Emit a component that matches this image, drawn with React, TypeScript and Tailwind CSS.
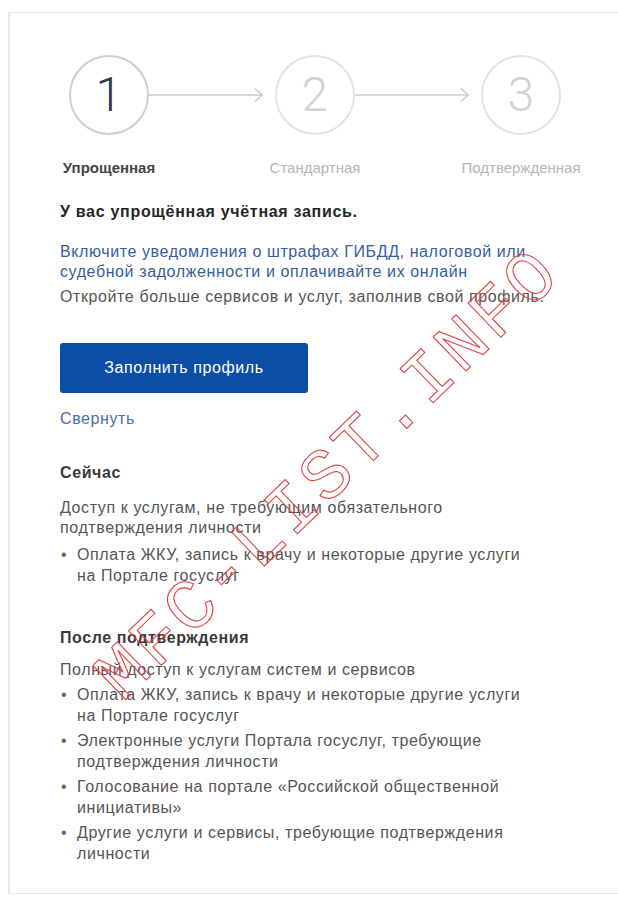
import React from "react";

const steps = [
  { n: "1", label: "Упрощенная", active: true },
  { n: "2", label: "Стандартная", active: false },
  { n: "3", label: "Подтвержденная", active: false },
];

const nowList = ["Оплата ЖКУ, запись к врачу и некоторые другие услуги на Портале госуслуг"];

const afterList = [
  "Оплата ЖКУ, запись к врачу и некоторые другие услуги на Портале госуслуг",
  "Электронные услуги Портала госуслуг, требующие подтверждения личности",
  "Голосование на портале «Российской общественной инициативы»",
  "Другие услуги и сервисы, требующие подтверждения личности",
];

function Arrow() {
  return (
    <div className="flex h-[80px] w-[126px] items-center">
      <svg width="126" height="16" viewBox="0 0 126 16" fill="none">
        <path d="M0 8H113" stroke="#cccccc" strokeWidth="1.6" />
        <path d="M106 1.5L113 8L106 14.5" stroke="#cccccc" strokeWidth="1.6" />
      </svg>
    </div>
  );
}

function Step({ n, label, active }: { n: string; label: string; active: boolean }) {
  return (
    <div className="flex w-[80px] flex-col items-center">
      <div
        className={
          active
            ? "flex h-[80px] w-[80px] items-center justify-center rounded-full border-2 border-[#c6d1dc] text-[48px] font-light text-[#2c3845]"
            : "flex h-[80px] w-[80px] items-center justify-center rounded-full border-2 border-[#e3e3e3] text-[48px] font-light text-[#d2d2d2]"
        }
        style={{ fontFamily: "Roboto, 'Liberation Sans', sans-serif" }}
      >
        {n}
      </div>
      <div
        className={
          active
            ? "mt-[23px] whitespace-nowrap text-[15px] leading-[20px] font-semibold tracking-normal text-[#444]"
            : "mt-[23px] whitespace-nowrap text-[15px] leading-[20px] tracking-normal text-[#b6b6b6]"
        }
      >
        {label}
      </div>
    </div>
  );
}

function Bullets({ items }: { items: string[] }) {
  return (
    <ul className="flex w-[475px] flex-col gap-[4px] leading-[21px]">
      {items.map((t) => (
        <li key={t} className="flex">
          <span className="w-[17px] shrink-0 pl-[1px] text-[#666]">•</span>
          <span>{t}</span>
        </li>
      ))}
    </ul>
  );
}

export default function App() {
  return (
    <div
      className="relative h-[899px] w-[618px] overflow-hidden bg-white text-[16px] leading-[20px] tracking-[0.6px] text-[#555]"
      style={{ fontFamily: "'Liberation Sans', Arial, sans-serif" }}
    >
      <div className="ml-[8px] mt-[12px] w-[640px] border-y border-l-2 border-[#e9e9e9] pb-[29px]">
        <div className="flex items-start pl-[59px] pt-[42px]">
          <Step {...steps[0]} />
          <Arrow />
          <Step {...steps[1]} />
          <Arrow />
          <Step {...steps[2]} />
        </div>

        <div className="w-[546px] pl-[50px]">
          <p className="mt-[24px] font-bold tracking-[0.7px] text-[#262626]">
            У вас упрощённая учётная запись.
          </p>
          <p className="mt-[20px] text-[#35609d]">
            Включите уведомления о штрафах ГИБДД, налоговой или судебной задолженности и оплачивайте их онлайн
          </p>
          <p className="mt-[5px]">Откройте больше сервисов и услуг, заполнив свой профиль.</p>
          <button
            type="button"
            className="mt-[36px] flex h-[50px] w-[248px] items-center justify-center rounded-[3px] bg-[#0c4ea6] text-white"
          >
            Заполнить профиль
          </button>
          <p className="mt-[16px] text-[#4670a8]">Свернуть</p>

          <p className="mt-[34px] font-bold text-[#3a3a3a]">Сейчас</p>
          <p className="mt-[15px]">Доступ к услугам, не требующим обязательного подтверждения личности</p>
          <div className="mt-[6px]">
            <Bullets items={nowList} />
          </div>

          <p className="mt-[42px] font-bold text-[#3a3a3a]">После подтверждения</p>
          <p className="mt-[12px]">Полный доступ к услугам систем и сервисов</p>
          <div className="mt-[4px]">
            <Bullets items={afterList} />
          </div>
        </div>
      </div>

      {/* diagonal site stamp over the page */}
      <div
        className="pointer-events-none absolute left-[330px] top-[476px] -translate-x-1/2 -translate-y-1/2 -rotate-[44deg] whitespace-nowrap text-[72px] leading-none tracking-[4px] text-transparent [-webkit-text-stroke:1.1px_#e04444]"
        style={{ fontFamily: "'Liberation Mono', 'Courier New', monospace" }}
      >
        MFC-LIST.INFO
      </div>
    </div>
  );
}
